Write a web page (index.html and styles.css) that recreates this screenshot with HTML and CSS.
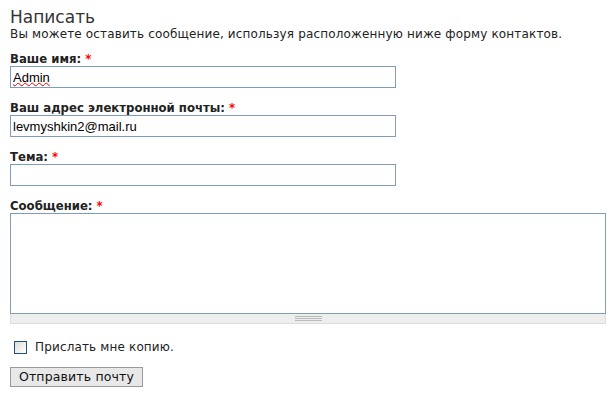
FILE: index.html
```html
<!DOCTYPE html>
<html>

<head>
    <meta charset="UTF-8">
    <title>Написать</title>
    <link rel="stylesheet" href="styles.css">
</head>

<body>
    <form class="contact-form">
        <h2 class="form-title">Написать</h2>
        <p class="form-intro">Вы можете оставить сообщение, используя расположенную ниже форму контактов.</p>

        <div class="form-item">
            <label for="name">Ваше имя: <span class="required">*</span></label>
            <div class="field-wrap">
                <input type="text" id="name" class="form-text" value="Admin" />
                <!-- подчёркивание орфографии поверх поля -->
                <span class="spell-mark">Admin</span>
            </div>
        </div>

        <div class="form-item">
            <label for="mail">Ваш адрес электронной почты: <span class="required">*</span></label>
            <input type="text" id="mail" class="form-text" value="levmyshkin2@mail.ru" />
        </div>

        <div class="form-item">
            <label for="subject">Тема: <span class="required">*</span></label>
            <input type="text" id="subject" class="form-text" />
        </div>

        <div class="form-item">
            <label for="message">Сообщение: <span class="required">*</span></label>
            <div class="resizable">
                <textarea id="message" class="form-textarea"></textarea>
                <div class="grippie"><span class="grip-lines"></span></div>
            </div>
        </div>

        <div class="form-check">
            <span class="checkbox"></span>
            <label for="copy">Прислать мне копию.</label>
        </div>

        <div class="form-actions">
            <button type="button" class="form-submit">Отправить почту</button>
        </div>
    </form>
</body>

</html>
```

FILE: styles.css
```css
body {
    margin: 0;
    padding: 0;
    background: #fff;
    font-family: "DejaVu Sans", Verdana, sans-serif;
    font-size: 12px;
    letter-spacing: 0.15px;
    color: #222;
}

.contact-form {
    display: flex;
    flex-direction: column;
    padding: 7px 6px 0 10px;
}

.form-title {
    margin: 0;
    font-size: 17px;
    font-weight: normal;
    letter-spacing: 0;
    color: #333;
    line-height: 20px;
}

.form-intro {
    margin: 0 0 11px;
    line-height: 14px;
    color: #222;
}

.form-item {
    display: flex;
    flex-direction: column;
    margin-bottom: 13px;
}

.form-item label {
    font-weight: bold;
    font-size: 11.7px;
    letter-spacing: 0;
    line-height: 14px;
    color: #222;
}

.required {
    color: #f00;
}

.field-wrap {
    position: relative;
    display: flex;
}

.form-text {
    box-sizing: border-box;
    width: 386px;
    height: 22px;
    margin: 0;
    padding: 1px 2px;
    border: 1px solid #7f9db9;
    font-family: "Liberation Sans", Arial, sans-serif;
    font-size: 13px;
    letter-spacing: 0;
    color: #000;
    outline: none;
}

.spell-mark {
    position: absolute;
    left: 3px;
    top: 3px;
    font-family: "Liberation Sans", Arial, sans-serif;
    font-size: 13px;
    letter-spacing: 0;
    line-height: 16px;
    color: transparent;
    text-decoration: underline wavy #e00;
    text-decoration-thickness: 1px;
    text-underline-offset: 1px;
    pointer-events: none;
}

.resizable {
    display: flex;
    flex-direction: column;
    width: 596px;
}

.form-textarea {
    box-sizing: border-box;
    width: 100%;
    height: 101px;
    margin: 0;
    border: 1px solid #7f9db9;
    resize: none;
    outline: none;
}

.grippie {
    box-sizing: border-box;
    height: 10px;
    background: #eee;
    border: 1px solid #ddd;
    border-top: none;
    display: flex;
    justify-content: center;
    align-items: center;
}

.grip-lines {
    width: 27px;
    height: 5px;
    background: repeating-linear-gradient(to bottom, #bbb 0, #bbb 1px, transparent 1px, transparent 2px);
}

.form-check {
    display: flex;
    align-items: center;
    gap: 8px;
    margin: 3px 0 0 4px;
}

.checkbox {
    box-sizing: border-box;
    width: 13px;
    height: 13px;
    border: 1px solid #1c5180;
    background: linear-gradient(135deg, #dcdcd7 0%, #f5f5f2 70%, #fff 100%);
}

.form-check label {
    color: #222;
    line-height: 14px;
}

.form-actions {
    margin-top: 13px;
}

.form-submit {
    width: 133px;
    height: 20px;
    padding: 0;
    border: 1px solid #999;
    background: #e8e8e8;
    font-family: "DejaVu Sans", Verdana, sans-serif;
    font-size: 12.5px;
    letter-spacing: 0.15px;
    line-height: 18px;
    color: #111;
}
```
